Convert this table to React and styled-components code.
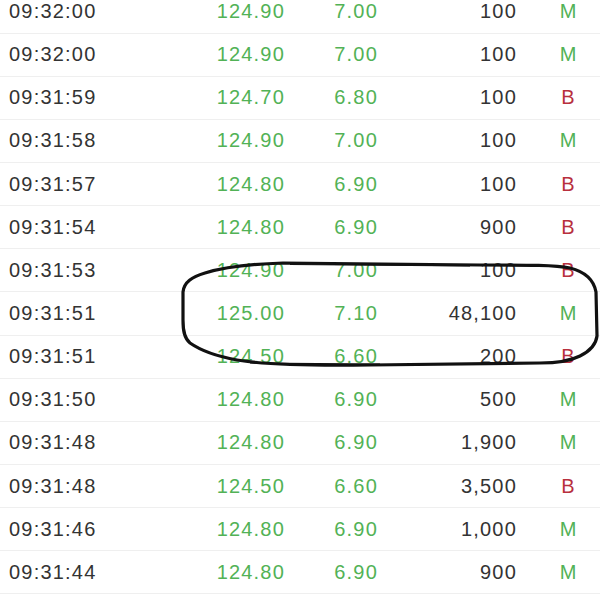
import React from "react";
import styled, { createGlobalStyle } from "styled-components";

const GlobalStyle = createGlobalStyle`
  html, body {
    margin: 0;
    padding: 0;
    background: #ffffff;
    overflow: hidden;
  }
`;

const trades = [
  ["09:32:00", "124.90", "7.00", "100", "M"],
  ["09:32:00", "124.90", "7.00", "100", "M"],
  ["09:31:59", "124.70", "6.80", "100", "B"],
  ["09:31:58", "124.90", "7.00", "100", "M"],
  ["09:31:57", "124.80", "6.90", "100", "B"],
  ["09:31:54", "124.80", "6.90", "900", "B"],
  ["09:31:53", "124.90", "7.00", "100", "B"],
  ["09:31:51", "125.00", "7.10", "48,100", "M"],
  ["09:31:51", "124.50", "6.60", "200", "B"],
  ["09:31:50", "124.80", "6.90", "500", "M"],
  ["09:31:48", "124.80", "6.90", "1,900", "M"],
  ["09:31:48", "124.50", "6.60", "3,500", "B"],
  ["09:31:46", "124.80", "6.90", "1,000", "M"],
  ["09:31:44", "124.80", "6.90", "900", "M"],
];

const Page = styled.div`
  position: relative;
  width: 600px;
  height: 600px;
  overflow: hidden;
  font-family: "Liberation Sans", Arial, sans-serif;
`;

const List = styled.div`
  margin-top: -9.5px;
  display: flex;
  flex-direction: column;
`;

const Row = styled.div`
  display: grid;
  grid-template-columns: 150px 126px 93px 139px 81px;
  align-items: center;
  height: 42.15px;
  padding-left: 9px;
  border-bottom: 1px solid #efefef;
  font-size: 20px;
  letter-spacing: 1.2px;
`;

const Time = styled.div`
  color: #333333;
`;

const Num = styled.div`
  text-align: right;
  color: ${(p) => (p.$green ? "#52b256" : "#333333")};
`;

const Side = styled.div`
  padding-left: 21px;
  text-align: center;
  letter-spacing: 0;
  color: ${(p) => (p.$type === "B" ? "#b8303e" : "#52b256")};
`;

const Scribble = styled.svg`
  position: absolute;
  top: 0;
  left: 0;
  pointer-events: none;
`;

export default function App() {
  return (
    <Page>
      <GlobalStyle />
      <List>
        {trades.map((t, i) => (
          <Row key={i}>
            <Time>{t[0]}</Time>
            <Num $green>{t[1]}</Num>
            <Num $green>{t[2]}</Num>
            <Num>{t[3]}</Num>
            <Side $type={t[4]}>{t[4]}</Side>
          </Row>
        ))}
      </List>
      <Scribble width="600" height="600" viewBox="0 0 600 600">
        <path
          d="M 283 263 L 480 265 C 530 265, 556 265, 570 268 C 586 272, 594 281, 596 292 L 597 336 C 596 345, 590 351, 580 356 C 570 361, 558 363, 540 363 L 370 365 C 300 366, 260 364, 237 360 C 215 356, 200 350, 190 343 C 184 338, 183 330, 183 320 L 183 292 C 184 282, 192 277, 205 273 C 225 267, 250 264, 283 263 Z"
          fill="none"
          stroke="#111"
          strokeWidth="3.2"
          strokeLinejoin="round"
        />
        <path
          d="M 290 264.5 L 470 266 M 380 364 L 250 363"
          fill="none"
          stroke="#111"
          strokeWidth="1.2"
        />
      </Scribble>
    </Page>
  );
}
